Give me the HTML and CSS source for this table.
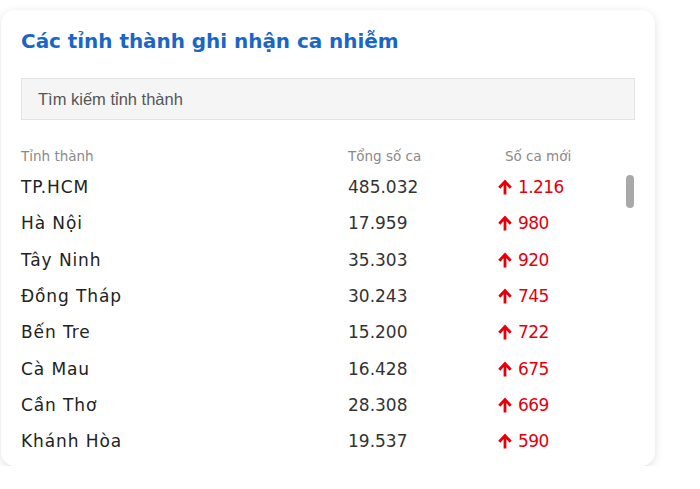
FILE: index.html
```html
<!DOCTYPE html>
<html lang="vi">
<head>
<meta charset="utf-8">
<link rel="stylesheet" href="styles.css">
</head>
<body>
<div class="card">
  <h2 class="title">Các tỉnh thành ghi nhận ca nhiễm</h2>
  <div class="search">Tìm kiếm tỉnh thành</div>
  <div class="table">
    <div class="row head"><span>Tỉnh thành</span><span>Tổng số ca</span><span class="newh">Số ca mới</span></div>
    <div class="body">
      <div class="row"><span class="name">TP.HCM</span><span class="tot">485.032</span><span class="new"><svg class="up" viewBox="0 0 14 16"><path d="M7 15.5V3M1.3 8.7L7 2.6l5.7 6.1" /></svg>1.216</span></div>
      <div class="row"><span class="name">Hà Nội</span><span class="tot">17.959</span><span class="new"><svg class="up" viewBox="0 0 14 16"><path d="M7 15.5V3M1.3 8.7L7 2.6l5.7 6.1" /></svg>980</span></div>
      <div class="row"><span class="name">Tây Ninh</span><span class="tot">35.303</span><span class="new"><svg class="up" viewBox="0 0 14 16"><path d="M7 15.5V3M1.3 8.7L7 2.6l5.7 6.1" /></svg>920</span></div>
      <div class="row"><span class="name">Đồng Tháp</span><span class="tot">30.243</span><span class="new"><svg class="up" viewBox="0 0 14 16"><path d="M7 15.5V3M1.3 8.7L7 2.6l5.7 6.1" /></svg>745</span></div>
      <div class="row"><span class="name">Bến Tre</span><span class="tot">15.200</span><span class="new"><svg class="up" viewBox="0 0 14 16"><path d="M7 15.5V3M1.3 8.7L7 2.6l5.7 6.1" /></svg>722</span></div>
      <div class="row"><span class="name">Cà Mau</span><span class="tot">16.428</span><span class="new"><svg class="up" viewBox="0 0 14 16"><path d="M7 15.5V3M1.3 8.7L7 2.6l5.7 6.1" /></svg>675</span></div>
      <div class="row"><span class="name">Cần Thơ</span><span class="tot">28.308</span><span class="new"><svg class="up" viewBox="0 0 14 16"><path d="M7 15.5V3M1.3 8.7L7 2.6l5.7 6.1" /></svg>669</span></div>
      <div class="row"><span class="name">Khánh Hòa</span><span class="tot">19.537</span><span class="new"><svg class="up" viewBox="0 0 14 16"><path d="M7 15.5V3M1.3 8.7L7 2.6l5.7 6.1" /></svg>590</span></div>
      <div class="thumb"></div>
    </div>
  </div>
</div>
</body>
</html>
```
FILE: styles.css
```css
html, body {
  margin: 0;
  padding: 0;
  background: #fff;
}
body {
  font-family: "DejaVu Sans", "Noto Sans", sans-serif;
  color: #222;
}
.card {
  width: 614px;
  margin: 10px 0 0 1px;
  padding: 18px 20px 7px 20px;
  background: #fff;
  border-radius: 14px;
  box-shadow: 0 2px 8px rgba(0, 0, 0, 0.13);
}
.title {
  margin: 0;
  font-size: 20px;
  line-height: 26px;
  font-weight: bold;
  color: #1a66c6;
  letter-spacing: -0.05px;
}
.search {
  margin-top: 24px;
  height: 42px;
  box-sizing: border-box;
  border: 1px solid #e3e3e3;
  background: #f5f5f5;
  padding: 0 16px;
  display: flex;
  align-items: center;
  font-family: "Liberation Sans", Arial, sans-serif;
  font-size: 16.5px;
  color: #555;
}
.table {
  margin-top: 26px;
}
.row {
  display: grid;
  grid-template-columns: 327px 150px 1fr;
  align-items: center;
  height: 36.3px;
  font-size: 17px;
  color: #222;
}
.row.head {
  height: 20px;
  font-size: 13.5px;
  color: #8a8a8a;
  margin-bottom: 3px;
}
.name {
  letter-spacing: 0.9px;
}
.newh {
  padding-left: 7px;
}
.body {
  position: relative;
}
.tot {
  color: #333;
}
.new {
  color: #e3000b;
  display: flex;
  align-items: center;
  letter-spacing: -0.6px;
}
.up {
  width: 14px;
  height: 16px;
  margin-right: 6px;
  fill: none;
  stroke: #e3000b;
  stroke-width: 2.8;
}
.thumb {
  position: absolute;
  right: 1px;
  top: 6px;
  width: 8px;
  height: 33px;
  border-radius: 4px;
  background: #a9a9a9;
}
```
